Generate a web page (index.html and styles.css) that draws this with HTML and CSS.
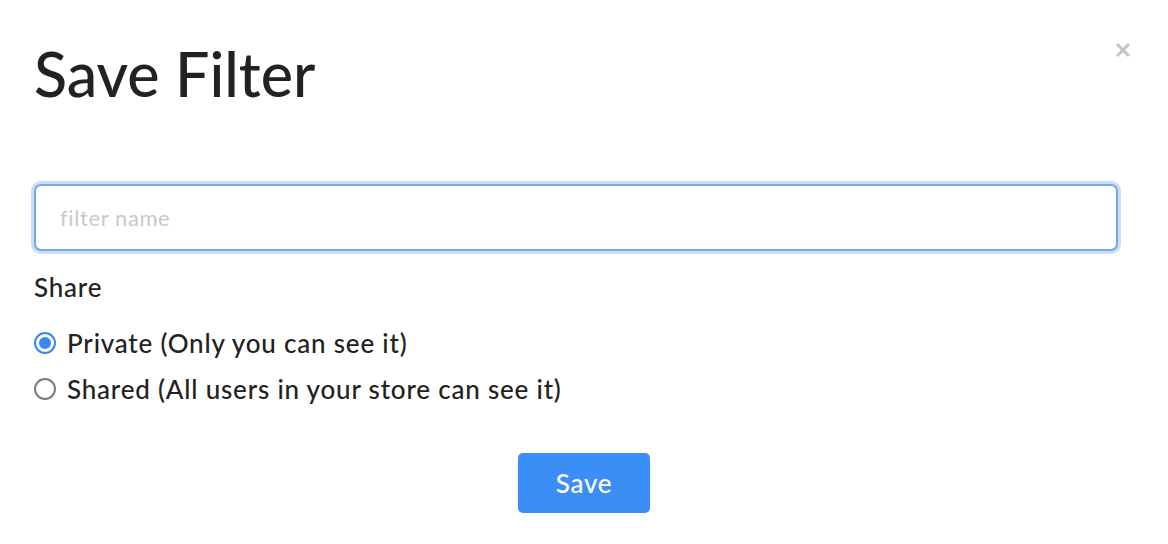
FILE: index.html
```html
<!DOCTYPE html>
<html>
<head>
<meta charset="utf-8">
<link rel="stylesheet" href="styles.css">
</head>
<body>
<div class="modal">
  <button class="close" aria-label="Close">
    <svg width="16" height="16" viewBox="0 0 16 16"><path d="M2 2 L14 14 M14 2 L2 14" stroke="#c4c4c4" stroke-width="3" stroke-linecap="butt"/></svg>
  </button>
  <h1 class="title">Save Filter</h1>
  <input class="name-input" type="text" placeholder="filter name">
  <div class="share-label">Share</div>
  <div class="options">
    <label class="option"><span class="radio checked"></span>Private (Only you can see it)</label>
    <label class="option"><span class="radio"></span>Shared (All users in your store can see it)</label>
  </div>
  <div class="actions">
    <button class="save">Save</button>
  </div>
</div>
</body>
</html>
```
FILE: styles.css
```css
* { box-sizing: border-box; }
html, body { margin: 0; background: #fff; }
body { font-family: Lato, "Open Sans", "Liberation Sans", sans-serif; color: #222; }
.modal { position: relative; width: 1168px; height: 544px; padding: 34px 50px 0 34px; display: flex; flex-direction: column; }
.close { position: absolute; top: 42px; right: 37px; border: 0; background: none; padding: 0; width: 16px; height: 16px; display: flex; }
.title { margin: 0; font-size: 61px; font-weight: 500; line-height: 80px; letter-spacing: 0; }
.name-input { margin-top: 70px; height: 67px; width: 1084px; border: 2px solid #74a9e3; border-radius: 7px; box-shadow: 0 0 0 3px #cadef8; padding: 0 24px; font-family: inherit; font-size: 22px; letter-spacing: 0.6px; color: #222; outline: none; }
.name-input::placeholder { color: #c9c9c9; }
.share-label { margin-top: 21px; font-size: 26px; letter-spacing: 0.8px; line-height: 30px; font-weight: 500; }
.options { margin-top: 26px; display: flex; flex-direction: column; gap: 16px; }
.option { display: flex; align-items: center; gap: 11px; font-size: 26px; letter-spacing: 0.8px; line-height: 30px; font-weight: 500; }
.radio { width: 22px; height: 22px; border-radius: 50%; border: 2px solid #7b7b7b; flex: none; position: relative; }
.radio.checked { border-color: #3a86f2; }
.radio.checked::after { content: ""; position: absolute; inset: 3px; border-radius: 50%; background: #3a86f2; }
.actions { margin-top: 49px; display: flex; justify-content: center; padding-left: 16px; }
.save { width: 132px; height: 60px; border: 0; border-radius: 5px; background: #3a8ef6; color: #fff; font-family: inherit; font-size: 26px; letter-spacing: 0.8px; font-weight: 500; }
```
